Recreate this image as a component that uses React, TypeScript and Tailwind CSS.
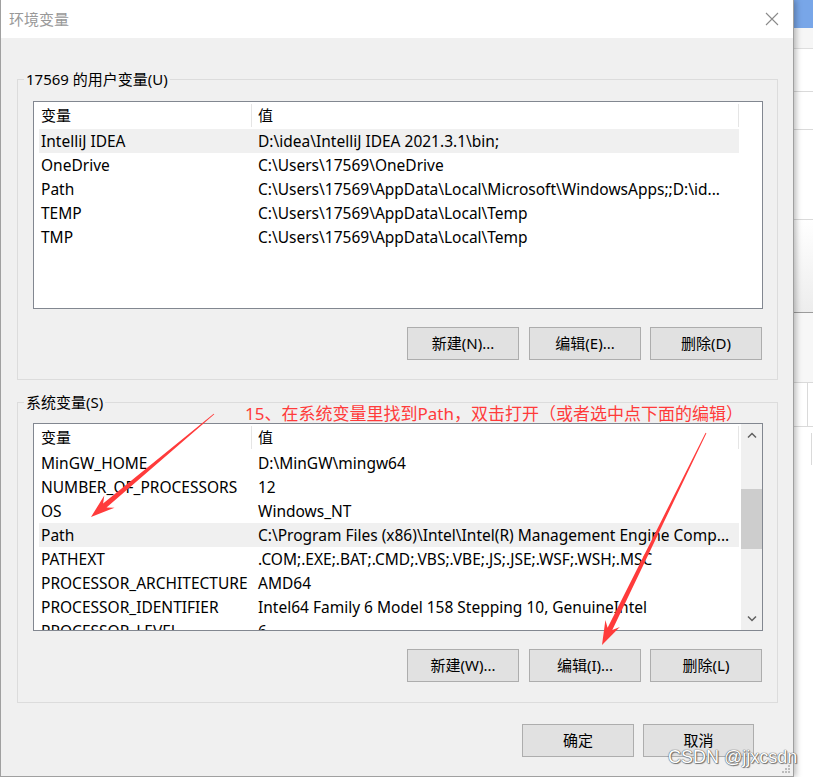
import React from "react";

type Row = [string, string];

const userVars: Row[] = [
  ["IntelliJ IDEA", "D:\\idea\\IntelliJ IDEA 2021.3.1\\bin;"],
  ["OneDrive", "C:\\Users\\17569\\OneDrive"],
  ["Path", "C:\\Users\\17569\\AppData\\Local\\Microsoft\\WindowsApps;;D:\\id..."],
  ["TEMP", "C:\\Users\\17569\\AppData\\Local\\Temp"],
  ["TMP", "C:\\Users\\17569\\AppData\\Local\\Temp"],
];

const sysVars: Row[] = [
  ["MinGW_HOME", "D:\\MinGW\\mingw64"],
  ["NUMBER_OF_PROCESSORS", "12"],
  ["OS", "Windows_NT"],
  ["Path", "C:\\Program Files (x86)\\Intel\\Intel(R) Management Engine Comp..."],
  ["PATHEXT", ".COM;.EXE;.BAT;.CMD;.VBS;.VBE;.JS;.JSE;.WSF;.WSH;.MSC"],
  ["PROCESSOR_ARCHITECTURE", "AMD64"],
  ["PROCESSOR_IDENTIFIER", "Intel64 Family 6 Model 158 Stepping 10, GenuineIntel"],
  ["PROCESSOR_LEVEL", "6"],
];

function Chevron({ down = false }: { down?: boolean }) {
  return (
    <svg width="10" height="7" viewBox="0 0 10 7">
      <polyline
        points={down ? "1,1.5 5,5.5 9,1.5" : "1,5.5 5,1.5 9,5.5"}
        fill="none"
        stroke="#606060"
        strokeWidth="1.5"
      />
    </svg>
  );
}

function ListView({ rows, selected, scroll = false }: { rows: Row[]; selected: number; scroll?: boolean }) {
  return (
    <div className="w-[730px] h-[208px] border border-[#828790] bg-white flex overflow-hidden">
      <div className="flex-1 min-w-0 flex flex-col">
        {/* header */}
        <div className="h-[27px] shrink-0 flex items-center">
          <div className="w-[217px] pl-[7px]">变量</div>
          <div className="w-px h-[23px] bg-[#e5e5e5]" />
          <div className="w-[486px] pl-[6px]">值</div>
          <div className="w-px h-[23px] bg-[#e5e5e5]" />
        </div>
        {rows.map(([name, value], i) => (
          <div key={name} className="h-[24px] shrink-0 flex text-[15.5px]">
            <div className="w-[5px]" />
            <div className={`w-[700px] pt-[2px] flex items-center ${i === selected ? "bg-[#f0f0f0]" : ""}`}>
              <div className="w-[213px] pl-[2px] whitespace-nowrap overflow-hidden">{name}</div>
              <div className="flex-1 pl-[6px] whitespace-nowrap overflow-hidden">{value}</div>
            </div>
          </div>
        ))}
      </div>
      {scroll && (
        <div className="w-[21px] bg-[#f0f0f0] flex flex-col">
          <div className="h-[23px] flex items-center justify-center">
            <Chevron />
          </div>
          <div className="flex-1">
            <div className="mt-[42px] h-[60px] bg-[#cdcdcd]" />
          </div>
          <div className="h-[23px] flex items-center justify-center">
            <Chevron down />
          </div>
        </div>
      )}
    </div>
  );
}

function Btn({ children, className = "w-[112px]" }: { children: React.ReactNode; className?: string }) {
  return (
    <button className={`h-[33px] border border-[#adadad] bg-[#e1e1e1] text-black leading-none ${className}`}>
      {children}
    </button>
  );
}

function Group({
  label,
  children,
  className = "",
}: {
  label: string;
  children: React.ReactNode;
  className?: string;
}) {
  return (
    <fieldset className={`ml-[16px] w-[761px] border border-[#dcdcdc] ${className}`}>
      <legend className="ml-[6px] px-[2px] h-[20px] leading-[20px]">{label}</legend>
      <div className="pl-[15px] pr-[14px]">{children}</div>
    </fieldset>
  );
}

function arrowPoints(x1: number, y1: number, x2: number, y2: number) {
  const dx = x2 - x1;
  const dy = y2 - y1;
  const len = Math.hypot(dx, dy);
  const ux = dx / len;
  const uy = dy / len;
  const nx = -uy;
  const ny = ux;
  const headLen = 24;
  const headW = 8;
  const neckW = 2.6;
  const tailW = 0.4;
  const bx = x2 - ux * headLen;
  const by = y2 - uy * headLen;
  const kx = x2 - ux * (headLen - 6);
  const ky = y2 - uy * (headLen - 6);
  const p = (x: number, y: number) => `${x.toFixed(1)},${y.toFixed(1)}`;
  return [
    p(x1 + nx * tailW, y1 + ny * tailW),
    p(kx + nx * neckW, ky + ny * neckW),
    p(bx + nx * headW, by + ny * headW),
    p(x2, y2),
    p(bx - nx * headW, by - ny * headW),
    p(kx - nx * neckW, ky - ny * neckW),
    p(x1 - nx * tailW, y1 - ny * tailW),
  ].join(" ");
}

export default function App() {
  return (
    <div className="relative w-[813px] h-[777px] overflow-hidden flex bg-white text-[15px] text-black font-['Noto_Sans','Noto_Sans_CJK_SC',sans-serif]">
      {/* dialog */}
      <div className="relative z-10 w-[794px] h-[777px] shrink-0 flex flex-col border-l border-r border-b border-[#a0a0a0] bg-[#f0f0f0] shadow-[2px_0_6px_rgba(0,0,0,0.28)]">
        <div className="h-[38px] shrink-0 bg-white flex items-center justify-between pl-[8px] pr-[14px]">
          <span className="text-[#999999]">环境变量</span>
          <svg width="14" height="14" viewBox="0 0 14 14">
            <path d="M1 1 L13 13 M13 1 L1 13" stroke="#8a8a8a" strokeWidth="1.1" fill="none" />
          </svg>
        </div>

        <div className="flex flex-col">
          <Group label="17569 的用户变量(U)" className="mt-[31px] pb-[19px]">
            <div className="mt-[12px]">
              <ListView rows={userVars} selected={0} />
            </div>
            <div className="mt-[18px] flex justify-end pr-[1px]">
              <Btn>新建(N)...</Btn>
              <Btn className="w-[112px] ml-[10px]">编辑(E)...</Btn>
              <Btn className="w-[112px] ml-[9px]">删除(D)</Btn>
            </div>
          </Group>

          <Group label="系统变量(S)" className="mt-[12px] pb-[20px]">
            <div className="mt-[11px]">
              <ListView rows={sysVars} selected={3} scroll />
            </div>
            <div className="mt-[18px] flex justify-end pr-[1px]">
              <Btn>新建(W)...</Btn>
              <Btn className="w-[112px] ml-[10px]">编辑(I)...</Btn>
              <Btn className="w-[112px] ml-[9px]">删除(L)</Btn>
            </div>
          </Group>

          <div className="mt-[21px] flex justify-end gap-[9px] pr-[39px]">
            <Btn>确定</Btn>
            <Btn className="w-[111px]">取消</Btn>
          </div>
        </div>

        {/* size grip */}
        <svg className="absolute right-[2px] bottom-[2px]" width="10" height="10" viewBox="0 0 10 10">
          <rect x="7" y="1" width="2" height="2" fill="#bcbcbc" />
          <rect x="4" y="4" width="2" height="2" fill="#bcbcbc" />
          <rect x="7" y="4" width="2" height="2" fill="#bcbcbc" />
          <rect x="1" y="7" width="2" height="2" fill="#bcbcbc" />
          <rect x="4" y="7" width="2" height="2" fill="#bcbcbc" />
          <rect x="7" y="7" width="2" height="2" fill="#bcbcbc" />
        </svg>
      </div>

      {/* window behind the dialog */}
      <div className="w-[19px] flex flex-col bg-white">
        <div className="h-[28px] bg-[#78a6e8]" />
        <div className="h-[21px] bg-[#f6f6f6] border-b border-[#dedede]" />
        <div className="h-[43px] border-b border-[#dadada]" />
        <div className="h-[38px] border-b border-[#dadada]" />
        <div className="h-[90px] border-b border-[#dadada]" />
        <div className="h-[93px] border-b border-[#9c9c9c] bg-gradient-to-b from-white to-[#ededed]" />
        <div className="h-[70px] bg-[#f7f7f7] border-b border-[#dadada]" />
        <div className="h-[44px] border-b border-[#dadada] flex justify-end pr-[5px]">
          <div className="w-px bg-[#dadada]" />
        </div>
        <div className="flex-1 flex justify-end pr-[1px] pt-[6px]">
          <div className="w-px h-[32px] bg-[#dadada]" />
        </div>
      </div>

      {/* annotation */}
      <div className="absolute z-20 left-[245px] top-[404px] h-[20px] leading-[20px] text-[17px] text-[#ff3b3b] whitespace-nowrap">
        15、在系统变量里找到Path，双击打开（或者选中点下面的编辑）
      </div>
      <svg className="absolute z-20 left-0 top-0 pointer-events-none" width="813" height="777">
        <polygon points={arrowPoints(214, 414, 91, 517)} fill="#ff3b3b" />
        <polygon points={arrowPoints(706, 433, 602, 645)} fill="#ff3b3b" />
      </svg>

      {/* watermark */}
      <div className="absolute z-30 left-[668px] top-[746px] h-[22px] leading-[22px] text-[18px] text-white font-['Liberation_Sans',sans-serif] whitespace-nowrap [text-shadow:0_0_1px_#555,0_0_1px_#555,1px_1px_1px_#777]">
        CSDN @jjxcsdn
      </div>
    </div>
  );
}
